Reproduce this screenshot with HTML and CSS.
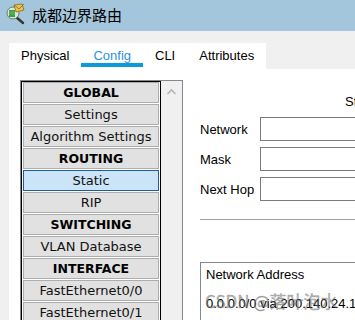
FILE: index.html
```html
<!DOCTYPE html>
<html lang="zh">
<head>
    <meta charset="UTF-8">
    <title>成都边界路由</title>
    <link rel="stylesheet" href="styles.css">
</head>
<body>
    <div class="titlebar">
        <svg class="app-icon" width="20" height="22" viewBox="0 0 20 22">
            <line x1="10" y1="14" x2="17" y2="20" stroke="#333" stroke-width="2.4" stroke-linecap="round"/>
            <circle cx="7" cy="10" r="6" fill="#dfe6e0" stroke="#6b7a70" stroke-width="1"/>
            <rect x="3" y="7" width="6" height="7" fill="#1f8a2e"/>
            <path d="M4 7v7M6 7v7M8 7v7M3 9h6M3 11h6" stroke="#7fd17f" stroke-width="0.6"/>
            <path d="M8 2l8 -1 2 6 -8 2z" fill="#e9c34a" stroke="#8a6a1a" stroke-width="0.8"/>
            <path d="M8 2l5 4 5 -5" fill="none" stroke="#8a6a1a" stroke-width="0.8"/>
        </svg>
        <span class="title">成都边界路由</span>
    </div>

    <div class="window">
        <div class="tabs">
            <div class="tab">Physical</div>
            <div class="tab active">Config</div>
            <div class="tab">CLI</div>
            <div class="tab">Attributes</div>
        </div>

        <div class="content">
            <div class="pane">
                <div class="menu">
                    <div class="item head">GLOBAL</div>
                    <div class="item">Settings</div>
                    <div class="item">Algorithm Settings</div>
                    <div class="item head">ROUTING</div>
                    <div class="item selected">Static</div>
                    <div class="item">RIP</div>
                    <div class="item head">SWITCHING</div>
                    <div class="item">VLAN Database</div>
                    <div class="item head">INTERFACE</div>
                    <div class="item">FastEthernet0/0</div>
                    <div class="item">FastEthernet0/1</div>
                </div>
                <div class="scrollbar">
                    <svg width="21" height="16" viewBox="0 0 21 16">
                        <polyline points="6.5,13 10.5,9 14.5,13" fill="none" stroke="#b4b4b4" stroke-width="1.6"/>
                    </svg>
                </div>
            </div>

            <div class="panel">
                <div class="panel-title">Static Routes</div>
                <div class="form-row">
                    <label>Network</label>
                    <div class="field"></div>
                </div>
                <div class="form-row">
                    <label>Mask</label>
                    <div class="field"></div>
                </div>
                <div class="form-row">
                    <label>Next Hop</label>
                    <div class="field"></div>
                </div>
                <div class="separator"></div>
                <div class="routes">
                    <div class="route-row">Network Address</div>
                    <div class="route-row">0.0.0.0/0 via 200.140.24.1</div>
                </div>
            </div>
        </div>
    </div>

    <div class="watermark">CSDN @落叶泡水</div>
</body>
</html>
```

FILE: styles.css
```css
body {
    margin: 0;
    width: 355px;
    height: 320px;
    overflow: hidden;
    background: #f0f0f0;
    font-family: "Liberation Sans", Arial, sans-serif;
    font-size: 13px;
    color: #000;
    position: relative;
}
.titlebar {
    height: 31px;
    background: #a4c6dc;
    display: flex;
    align-items: center;
}
.app-icon {
    margin-left: 6px;
    margin-top: -4px;
}
.title {
    margin-left: 6px;
    font-family: "Noto Sans CJK SC", sans-serif;
    font-size: 15px;
    margin-top: -2px;
}
.window {
    padding: 12px 0 0 9px;
}
.tabs {
    width: 257px;
    height: 26px;
    background: #fff;
    display: flex;
    align-items: flex-start;
}
.tab {
    height: 24px;
    box-sizing: border-box;
    padding: 5px 12px 0;
    line-height: 15px;
    white-space: nowrap;
}
.tab.active {
    color: #2d92d8;
    border-bottom: 4px solid #0b9cd8;
}
.content {
    background: #fff;
    height: 251px;
    display: flex;
    padding: 11px 0 0 11px;
    box-sizing: border-box;
}
.pane {
    width: 163px;
    height: 260px;
    flex-shrink: 0;
    box-sizing: border-box;
    border: 1px solid #828790;
    display: flex;
}
.menu {
    width: 140px;
    box-sizing: border-box;
    border: 1px solid #000;
    border-bottom: none;
    padding: 0 1px;
    display: flex;
    flex-direction: column;
    gap: 1px;
}
.item {
    height: 21px;
    flex-shrink: 0;
    box-sizing: border-box;
    border: 1px solid #adadad;
    background: #e1e1e1;
    font-family: "DejaVu Sans", Verdana, sans-serif;
    font-size: 13px;
    line-height: 19px;
    text-align: center;
    white-space: nowrap;
    color: #111;
}
.item.head {
    font-weight: bold;
    font-size: 12.5px;
    color: #000;
}
.item.selected {
    background: #cce4f7;
    border-color: #1f5c99;
}
.scrollbar {
    width: 21px;
    background: #f0f0f0;
}
.scrollbar svg {
    display: block;
}
.panel {
    flex: 1;
    min-width: 0;
    overflow: hidden;
}
.panel-title {
    padding-left: 162px;
    margin-top: 14px;
    height: 23px;
    line-height: 15px;
    white-space: nowrap;
}
.form-row {
    display: flex;
    align-items: center;
    padding-left: 17px;
    height: 24px;
    margin-bottom: 6px;
}
.form-row label {
    width: 60px;
    flex-shrink: 0;
}
.field {
    width: 140px;
    height: 24px;
    flex-shrink: 0;
    box-sizing: border-box;
    border: 1px solid #7a7a7a;
    background: #fff;
}
.separator {
    margin: 18px 0 0 17px;
    height: 1px;
    background: #a0a0a0;
}
.routes {
    margin: 42px 0 0 17px;
    width: 200px;
    height: 80px;
    box-sizing: border-box;
    border: 1px solid #828790;
    padding: 2px 5px;
}
.route-row {
    line-height: 19px;
    margin-bottom: 10px;
    white-space: nowrap;
}
.watermark {
    position: absolute;
    left: 205px;
    top: 288px;
    font-family: "Noto Sans CJK SC", sans-serif;
    font-size: 17px;
    color: rgba(120, 120, 120, 0.55);
    -webkit-text-stroke: 0.4px rgba(90, 90, 90, 0.5);
    white-space: nowrap;
}
```
